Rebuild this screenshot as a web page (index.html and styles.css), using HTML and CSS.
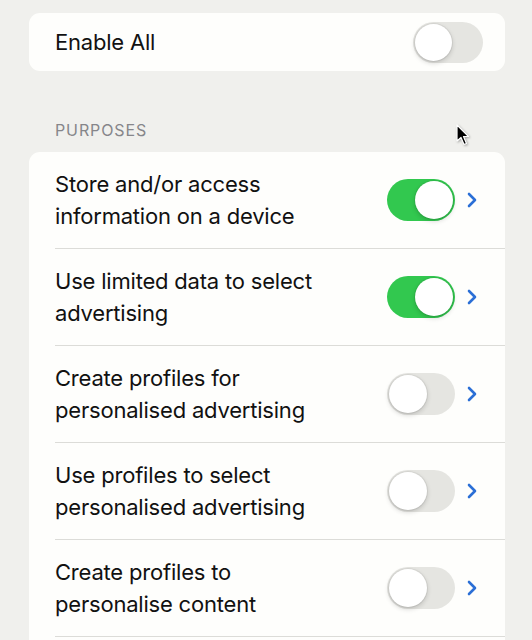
FILE: index.html
```html
<!DOCTYPE html>
<html lang="en">
<head>
    <meta charset="UTF-8">
    <meta name="viewport" content="width=device-width, initial-scale=1.0">
    <title>Privacy Preferences</title>
    <link rel="stylesheet" href="styles.css">
</head>
<body>

    <main class="screen">
        <section class="card card-single">
            <div class="row row-last">
                <span class="label">Enable All</span>
                <span class="toggle toggle-wide"><span class="knob"></span></span>
            </div>
        </section>

        <h2 class="section-title">PURPOSES</h2>

        <section class="card">
            <div class="row">
                <span class="label">Store and/or access information on a device</span>
                <span class="toggle on"><span class="knob"></span></span>
                <svg class="chevron" viewBox="0 0 10 16"><path d="M2 2 L8 8 L2 14"/></svg>
            </div>
            <div class="row">
                <span class="label">Use limited data to select advertising</span>
                <span class="toggle on"><span class="knob"></span></span>
                <svg class="chevron" viewBox="0 0 10 16"><path d="M2 2 L8 8 L2 14"/></svg>
            </div>
            <div class="row">
                <span class="label">Create profiles for personalised advertising</span>
                <span class="toggle"><span class="knob"></span></span>
                <svg class="chevron" viewBox="0 0 10 16"><path d="M2 2 L8 8 L2 14"/></svg>
            </div>
            <div class="row">
                <span class="label">Use profiles to select personalised advertising</span>
                <span class="toggle"><span class="knob"></span></span>
                <svg class="chevron" viewBox="0 0 10 16"><path d="M2 2 L8 8 L2 14"/></svg>
            </div>
            <div class="row">
                <span class="label">Create profiles to personalise content</span>
                <span class="toggle"><span class="knob"></span></span>
                <svg class="chevron" viewBox="0 0 10 16"><path d="M2 2 L8 8 L2 14"/></svg>
            </div>
            <!-- next row is scrolled below the fold -->
            <div class="row-more"></div>
        </section>
    </main>

    <!-- mouse pointer caught in the capture -->
    <svg class="pointer" viewBox="0 0 14 22">
        <path d="M1 1 L1 17 L5 13.5 L8 20.5 L10.5 19.5 L7.5 12.5 L12.5 12.5 Z"/>
    </svg>

</body>
</html>
```

FILE: styles.css
```css
body {
    margin: 0;
    height: 640px;
    overflow: hidden;
    background-color: #f0f0ed;
    font-family: Inter, 'Noto Sans', 'Liberation Sans', sans-serif;
    color: #111;
    position: relative;
}

.screen {
    padding: 13px 27px 0 29px;
}

.card {
    background-color: #fefefc;
    border-radius: 11px;
    overflow: hidden;
}

.row {
    display: flex;
    align-items: center;
    box-sizing: border-box;
    height: 97px;
    margin-left: 26px;
    padding: 0 28px 0 0;
    border-bottom: 1px solid #dcdcd8;
}

.card-single .row {
    height: 58px;
    padding: 0 22px 0 0;
}

.row-last {
    border-bottom: none;
}

.row-more {
    height: 40px;
}

.label {
    width: 285px;
    font-size: 22px;
    line-height: 32px;
    letter-spacing: -0.2px;
}

.toggle {
    position: relative;
    margin-left: auto;
    width: 68px;
    height: 42px;
    border-radius: 21px;
    background-color: #e5e5e1;
    flex-shrink: 0;
}

.toggle-wide {
    width: 70px;
    height: 41px;
}

.toggle.on {
    background-color: #32c84f;
}

.knob {
    position: absolute;
    top: 2px;
    left: 2px;
    width: 38px;
    height: 38px;
    border-radius: 50%;
    background-color: #fff;
    box-shadow: 0 2px 5px rgba(0, 0, 0, 0.18), 0 0 0 1px rgba(0, 0, 0, 0.05);
}

.toggle-wide .knob {
    width: 37px;
    height: 37px;
}

.toggle.on .knob {
    left: auto;
    right: 2px;
}

.chevron {
    width: 10px;
    height: 16px;
    margin-left: 12px;
    fill: none;
    stroke: #2b6fd6;
    stroke-width: 2.6;
    stroke-linecap: round;
    stroke-linejoin: round;
}

.section-title {
    margin: 49px 0 12px 26px;
    font-size: 16px;
    font-weight: 400;
    line-height: 20px;
    letter-spacing: 0.9px;
    color: #86868a;
}

.pointer {
    position: absolute;
    left: 456px;
    top: 124px;
    width: 14px;
    height: 22px;
    fill: #000;
    stroke: #fff;
    stroke-width: 1.2;
    stroke-linejoin: round;
    filter: drop-shadow(1px 1px 1px rgba(0, 0, 0, 0.3));
}
```
